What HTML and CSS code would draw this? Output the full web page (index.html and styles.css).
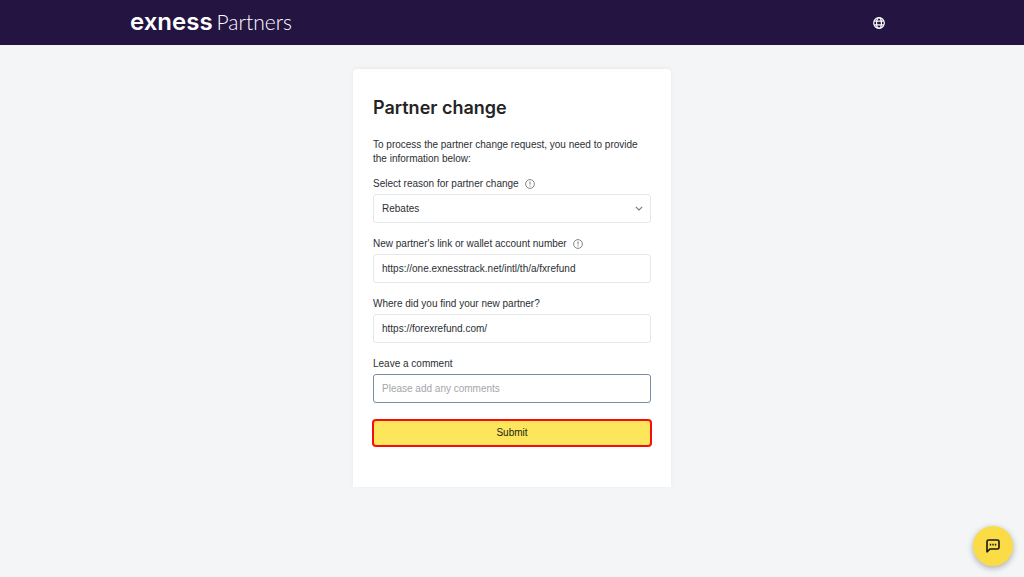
FILE: index.html
```html
<!DOCTYPE html>
<html lang="en">
  <head>
    <meta charset="UTF-8" />
    <meta name="viewport" content="width=device-width, initial-scale=1.0" />
    <title>Partner change</title>
    <link rel="stylesheet" href="styles.css">
  </head>

  <body>
    <header class="topbar">
      <div class="topbar-inner">
        <a href="#" class="logo"><span class="logo-name">exness</span><span class="logo-sub">Partners</span></a>
        <button class="lang" type="button" aria-label="Language">
          <svg viewBox="0 0 12 12" width="12" height="12" fill="none" stroke="currentColor" stroke-width="1.2">
            <circle cx="6" cy="6" r="5.3" />
            <ellipse cx="6" cy="6" rx="2.4" ry="5.3" />
            <path d="M1.2 4.1h9.6M1.2 7.9h9.6" />
          </svg>
        </button>
      </div>
    </header>

    <main class="page">
      <form class="card">
        <h1 class="title">Partner change</h1>
        <p class="intro">To process the partner change request, you need to provide the information below:</p>

        <div class="field">
          <div class="label-row">
            <label for="reason">Select reason for partner change</label>
            <svg class="info" viewBox="0 0 10 10" width="10" height="10" fill="none" stroke="currentColor">
              <circle cx="5" cy="5" r="4.4" stroke-width=".9" />
              <path d="M5 2.5v3M5 6.5v1" />
            </svg>
          </div>
          <div class="select-wrap">
            <select id="reason" class="control">
              <option>Rebates</option>
            </select>
            <svg class="chevron" viewBox="0 0 8 5" width="8" height="5" fill="none" stroke="currentColor" stroke-width="1.1">
              <path d="M.8.8 4 4 7.2.8" />
            </svg>
          </div>
        </div>

        <div class="field">
          <div class="label-row">
            <label for="link">New partner's link or wallet account number</label>
            <svg class="info" viewBox="0 0 10 10" width="10" height="10" fill="none" stroke="currentColor">
              <circle cx="5" cy="5" r="4.4" stroke-width=".9" />
              <path d="M5 2.5v3M5 6.5v1" />
            </svg>
          </div>
          <input id="link" class="control" type="text" value="https://one.exnesstrack.net/intl/th/a/fxrefund" />
        </div>

        <div class="field">
          <div class="label-row">
            <label for="source">Where did you find your new partner?</label>
          </div>
          <input id="source" class="control" type="text" value="https://forexrefund.com/" />
        </div>

        <div class="field">
          <div class="label-row">
            <label for="comment">Leave a comment</label>
          </div>
          <input id="comment" class="control active" type="text" placeholder="Please add any comments" />
        </div>

        <button class="submit" type="submit">Submit</button>
      </form>
    </main>

    <button class="chat" type="button" aria-label="Chat">
      <svg viewBox="0 0 14 14" width="14" height="14" fill="none" stroke="currentColor" stroke-width="1.6" stroke-linejoin="round">
        <path d="M1 12.8V2.6Q1 1 2.6 1h8.8Q13 1 13 2.6v5.8Q13 10 11.4 10H4z" />
        <path d="M3.8 5.6h1.4M6.3 5.6h1.4M8.8 5.6h1.4" />
      </svg>
    </button>
  </body>
</html>
```

FILE: styles.css
```css
* {
  box-sizing: border-box;
}

body {
  margin: 0;
  min-height: 100vh;
  background-color: #f3f5f7;
  color: #2b2f33;
  font-family: "Liberation Sans", Arial, sans-serif;
  font-size: 10px;
  line-height: 14px;
}

.topbar {
  background-color: #241442;
  color: #fff;
}

.topbar-inner {
  display: flex;
  align-items: center;
  justify-content: space-between;
  width: 75%;
  height: 45px;
  margin: 0 auto;
  padding: 0 11px 0 2px;
}

.logo {
  display: flex;
  align-items: baseline;
  gap: 4px;
  padding-bottom: 2px;
  color: #fff;
  text-decoration: none;
  line-height: 24px;
}

.logo-name {
  font-family: Inter, sans-serif;
  font-size: 24px;
  font-weight: 600;
}

.logo-sub {
  font-family: Lato, sans-serif;
  font-size: 21px;
  font-weight: 300;
}

.lang {
  display: flex;
  padding: 0;
  border: 0;
  background: none;
  color: #fff;
}

.page {
  display: flex;
  justify-content: center;
  padding: 24px 16px;
}

.card {
  width: 100%;
  max-width: 318px;
  padding: 25px 20px 41px;
  border-radius: 4px 4px 0 0;
  background-color: #fff;
  box-shadow: 0 -1px 4px rgba(0, 0, 0, 0.06);
}

.title {
  margin: 0 0 16px;
  font-family: Inter, sans-serif;
  font-size: 18px;
  font-weight: 600;
  line-height: 28px;
  color: #242424;
}

.intro {
  margin: 0 0 11px;
}

.field {
  margin-bottom: 14px;
}

.label-row {
  display: flex;
  align-items: center;
  gap: 6px;
  margin-bottom: 3px;
}

.info {
  color: #777;
}

.control {
  display: block;
  width: 100%;
  height: 29px;
  padding: 0 8px;
  border: 1px solid #e6e7e9;
  border-radius: 3px;
  background-color: #fff;
  color: #2b2f33;
  font: inherit;
  appearance: none;
  outline: none;
}

.control::placeholder {
  color: #a3a6ab;
}

.control.active {
  border-color: #7b8ca5;
}

.select-wrap {
  position: relative;
}

.chevron {
  position: absolute;
  top: 12px;
  right: 8px;
  color: #777;
  pointer-events: none;
}

.submit {
  display: block;
  width: 100%;
  height: 26px;
  margin-top: 17px;
  padding: 0;
  border: 1px solid #f80c0c;
  border-radius: 3px;
  background-color: #fde55c;
  box-shadow: 0 0 0 1px #f80c0c;
  color: #241f10;
  font: inherit;
}

.chat {
  position: fixed;
  right: 11px;
  bottom: 11px;
  display: flex;
  align-items: center;
  justify-content: center;
  width: 40px;
  height: 40px;
  padding: 0;
  border: 0;
  border-radius: 50%;
  background-color: #fbdc46;
  color: #171717;
  box-shadow: 0 2px 6px rgba(0, 0, 0, 0.3);
}
```
